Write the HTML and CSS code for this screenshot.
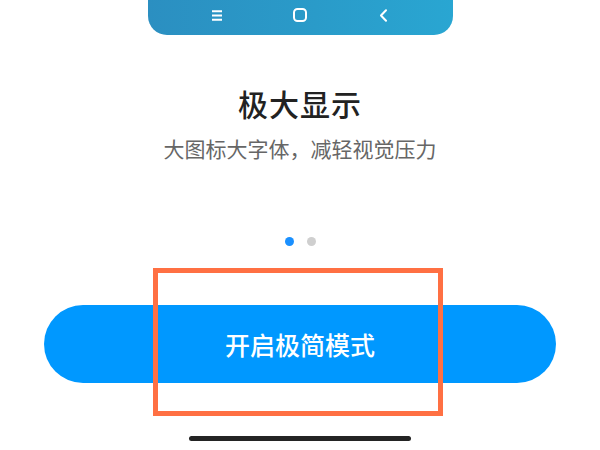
FILE: index.html
```html
<!DOCTYPE html>
<html lang="zh-CN">
<head>
<meta charset="utf-8">
<title>极大显示</title>
<link rel="stylesheet" href="styles.css">
</head>
<body>
<div class="screen">
  <div class="navbar">
    <div class="nav-icon">
      <svg width="10" height="11" viewBox="0 0 10 11"><path d="M0 1.2H10M0 5.5H10M0 9.8H10" stroke="#fff" stroke-width="2" fill="none"/></svg>
    </div>
    <div class="nav-icon">
      <svg width="14" height="14" viewBox="0 0 14 14"><rect x="1" y="1" width="12" height="12" rx="3.5" stroke="#fff" stroke-width="2" fill="none"/></svg>
    </div>
    <div class="nav-icon">
      <svg width="9" height="13" viewBox="0 0 9 13"><path d="M7 1.2L2 6.5L7 11.8" stroke="#fff" stroke-width="2" fill="none" stroke-linecap="round" stroke-linejoin="round"/></svg>
    </div>
  </div>
  <h1 class="title">极大显示</h1>
  <p class="subtitle">大图标大字体，减轻视觉压力</p>
  <div class="dots">
    <span class="dot active"></span>
    <span class="dot"></span>
  </div>
  <button class="cta">开启极简模式</button>
  <div class="home-indicator"></div>
  <div class="highlight"></div>
</div>
</body>
</html>
```
FILE: styles.css
```css
html, body {
  margin: 0;
  padding: 0;
  background: #ffffff;
}
.screen {
  position: relative;
  width: 600px;
  height: 450px;
  overflow: hidden;
  display: flex;
  flex-direction: column;
  align-items: center;
  font-family: "Noto Sans CJK SC", "Noto Sans", sans-serif;
}
.navbar {
  width: 305px;
  height: 35px;
  box-sizing: border-box;
  padding-bottom: 5px;
  border-radius: 0 0 19px 19px;
  background: linear-gradient(90deg, #2b8fc1 0%, #2a9bc9 55%, #29a6d2 100%);
  display: flex;
  align-items: center;
  justify-content: center;
  gap: 63px;
}
.nav-icon {
  width: 20px;
  height: 16px;
  display: flex;
  align-items: center;
  justify-content: center;
}
.title {
  margin: 52px 0 0;
  font-size: 30px;
  line-height: 32px;
  font-weight: 500;
  color: #222222;
  letter-spacing: 1px;
}
.subtitle {
  margin: 16px 0 0;
  font-size: 21px;
  line-height: 26px;
  color: #666666;
}
.dots {
  margin-top: 76px;
  display: flex;
  gap: 13px;
}
.dot {
  width: 9px;
  height: 9px;
  border-radius: 50%;
  background: #cfcfcf;
}
.dot.active {
  background: #1a90ff;
}
.cta {
  margin-top: 59px;
  width: 512px;
  height: 78px;
  border: none;
  border-radius: 39px;
  background: #0098ff;
  color: #ffffff;
  font-family: "Noto Sans CJK SC", "Noto Sans", sans-serif;
  font-size: 25px;
  font-weight: 500;
  padding: 0;
}
.home-indicator {
  margin-top: 53px;
  width: 222px;
  height: 5px;
  border-radius: 3px;
  background: #242424;
}
.highlight {
  position: absolute;
  left: 153px;
  top: 268px;
  width: 290px;
  height: 148px;
  box-sizing: border-box;
  border: 5px solid #ff7043;
}
```
